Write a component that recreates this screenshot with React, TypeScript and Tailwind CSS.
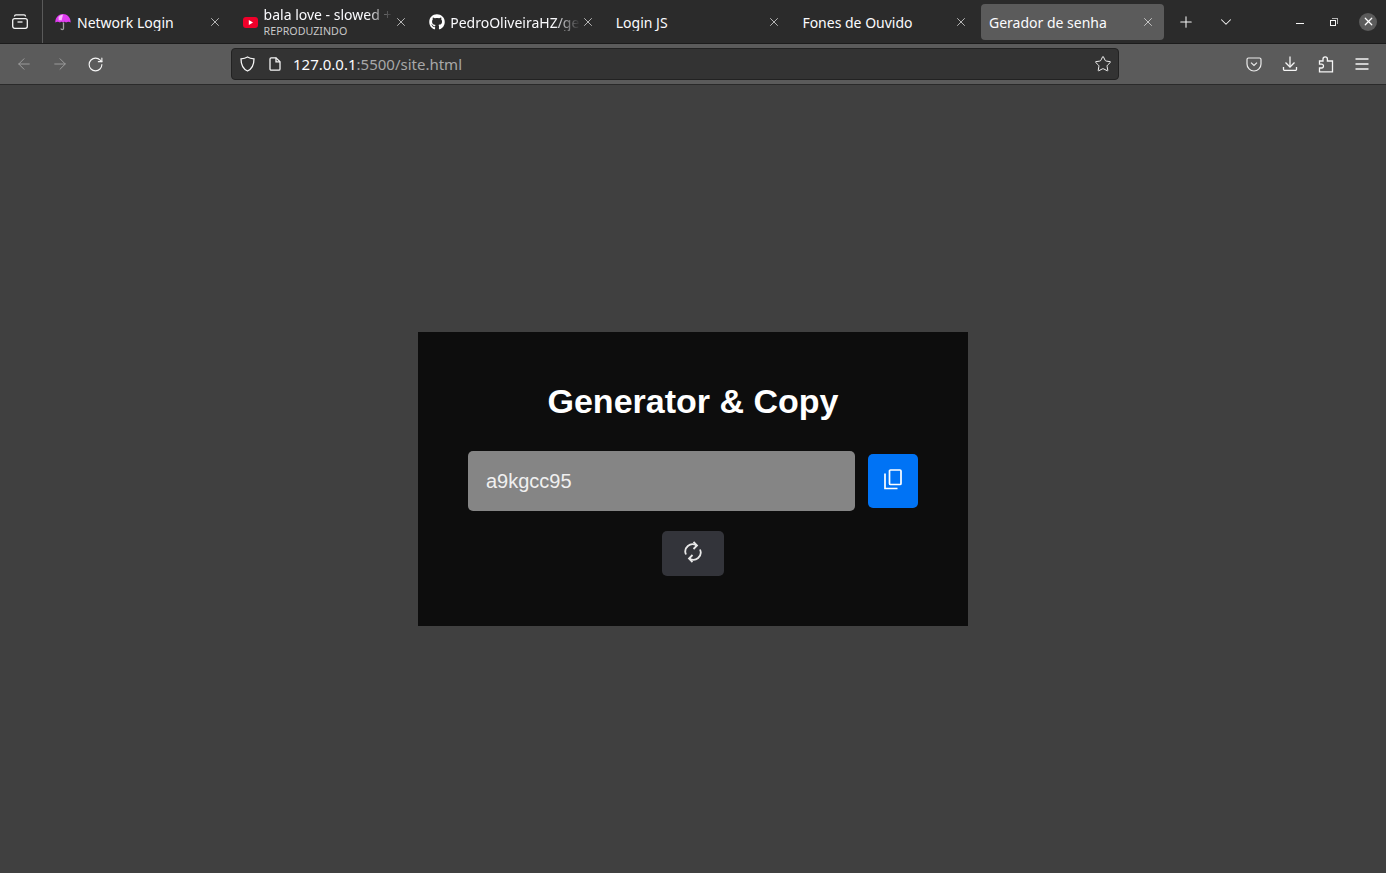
import React from 'react';
import { X, Plus, ChevronDown, ArrowLeft, ArrowRight, RotateCw, Star } from 'lucide-react';
import { FaGithub } from 'react-icons/fa';

const Umbrella = () => (
  <svg width="16" height="18" viewBox="0 0 16 18" className="shrink-0">
    <path d="M0.3 9.5 C0.3 4 4 1 8 1 C12 1 15.7 4 15.7 9.5 C14.2 8.4 12.6 8.4 11 9.5 C10 8.4 9 8.4 8 9.5 C7 8.4 6 8.4 5 9.5 C3.4 8.4 1.8 8.4 0.3 9.5 Z" fill="#e03cf0" />
    <path d="M3.5 4 C5 2.4 6.5 1.8 8 1.8 L6.6 7.5 C5.6 7 4.6 7 3.8 7.5 Z" fill="#f7b8fb" />
    <path d="M8.5 9.5 V15.5 C8.5 17 6 17 6 15.5" stroke="#a0a0a0" strokeWidth="1.3" fill="none" />
  </svg>
);

const Youtube = () => (
  <svg width="15" height="11" viewBox="0 0 15 11" className="shrink-0 ml-px">
    <rect width="15" height="11" rx="3" fill="#f0002a" />
    <path d="M5.8 3 L10 5.5 L5.8 8 Z" fill="#fff" />
  </svg>
);

const tabs = [
  { title: 'Network Login', icon: <Umbrella /> },
  { title: 'bala love - slowed + reverb', sub: 'REPRODUZINDO', icon: <Youtube /> },
  { title: 'PedroOliveiraHZ/gerador', icon: <FaGithub size={16} className="shrink-0 text-white ml-px -mr-px" /> },
  { title: 'Login JS' },
  { title: 'Fones de Ouvido' },
  { title: 'Gerador de senha', active: true },
];

const Tab = ({ title, sub, icon, active }: { title: string; sub?: string; icon?: React.ReactNode; active?: boolean }) => (
  <div className="w-[186.6px] px-[2px] py-1 shrink-0">
    <div className={`h-9 flex items-center gap-[6px] pr-[9px] rounded ${icon ? 'pl-[7px]' : 'pl-2'} ${active ? 'bg-[#5b5b5b]' : ''}`}>
      {icon}
      <div className={`flex-1 min-w-0 overflow-hidden -mr-[5px] ${sub ? 'pt-px' : ''}`}>
        <div className={`text-[14px] leading-[17px] whitespace-nowrap overflow-hidden text-[#fbfbfe] ${title.length > 20 ? 'mask-r-from-80%' : ''}`}>{title}</div>
        {sub && <div className="mt-px text-[10.7px] leading-[15px] text-[#c8c8c8] whitespace-nowrap">{sub}</div>}
      </div>
      <X size={14} strokeWidth={1.2} className="shrink-0 text-[#f0f0f0]" />
    </div>
  </div>
);

export default function App() {
  return (
    <div className="h-[873px] flex flex-col bg-[#404040] overflow-hidden font-['Noto_Sans',sans-serif]">
      <div className="h-[44px] flex bg-[#2b2b2b] border-b border-[#1c1c1c] shrink-0">
        <div className="w-[43px] h-full flex items-center justify-center border-r border-[#5a5a5a] shrink-0">
          <svg width="16" height="15" viewBox="0 0 16 15" fill="none" stroke="#f5f5f5" strokeWidth="1.3" className="-ml-[2px]">
            <rect x="0.7" y="4.6" width="14.6" height="9.7" rx="2" />
            <path d="M2.5 2.4 V2.2 A1.5 1.5 0 0 1 4 0.8 H12 A1.5 1.5 0 0 1 13.5 2.2 V2.4" />
            <path d="M5.5 8 H10.5" />
          </svg>
        </div>
        <div className="flex pl-[3px]">
          {tabs.map((t) => <Tab key={t.title} {...t} />)}
        </div>
        <div className="flex items-center">
          <Plus size={18} strokeWidth={1.4} className="ml-[11px] text-[#f5f5f5]" />
          <ChevronDown size={18} strokeWidth={1.4} className="ml-[22px] text-[#f5f5f5]" />
        </div>
        <div className="flex-1 flex items-center justify-end pr-[9px]">
          <div className="w-[8px] h-px bg-[#f5f5f5] mr-[26px] mt-[3px]" />
          <div className="relative w-[8px] h-[8px] mr-[21px]">
            <div className="absolute left-0 bottom-0 w-[6px] h-[6px] border border-[#f5f5f5]" />
            <div className="absolute right-0 top-0 w-[6px] h-[6px] border-t border-r border-[#b5b5b5]" />
          </div>
          <div className="w-[18px] h-[18px] rounded-full bg-[#5b5b5b] flex items-center justify-center">
            <X size={13} strokeWidth={2.2} className="text-white" />
          </div>
        </div>
      </div>

      <div className="h-[41px] flex items-center bg-[#5b5b5b] border-b border-[#2a2a2a] shrink-0">
        <ArrowLeft size={18} strokeWidth={1.3} className="ml-[15px] text-[#9d9d9d]" />
        <ArrowRight size={18} strokeWidth={1.3} className="ml-[18px] text-[#9d9d9d]" />
        <RotateCw size={17} strokeWidth={1.6} className="ml-[18px] text-[#f5f5f5]" />
        <div className="ml-[127px] w-[888px] h-[32px] flex items-center rounded bg-[#333333] border border-[#222222] pl-[8px] pr-[6px]">
          <svg width="15" height="16" viewBox="0 0 15 16" fill="none" stroke="#f5f5f5" strokeWidth="1.3" className="shrink-0">
            <path d="M7.5 1 C9.5 2.2 11.5 2.6 14 2.8 C14 9 12 13 7.5 15 C3 13 1 9 1 2.8 C3.5 2.6 5.5 2.2 7.5 1 Z" />
          </svg>
          <svg width="12" height="14" viewBox="0 0 12 14" fill="none" stroke="#f5f5f5" strokeWidth="1.3" className="ml-[14px] shrink-0">
            <path d="M1 2 A1.2 1.2 0 0 1 2.2 0.8 H7 L11 4.8 V12 A1.2 1.2 0 0 1 9.8 13.2 H2.2 A1.2 1.2 0 0 1 1 12 Z" />
            <path d="M7 0.8 V4.8 H11" />
          </svg>
          <div className="ml-[12px] flex-1 text-[15px] text-[#fbfbfe] whitespace-nowrap">
            127.0.0.1<span className="text-[#a8a8a8]">:5500/site.html</span>
          </div>
          <Star size={18} strokeWidth={1.3} className="text-[#f5f5f5]" />
        </div>
        <div className="flex-1 flex items-center justify-end pr-[16px] gap-[20px]">
          <svg width="16" height="15" viewBox="0 0 16 15" fill="none" stroke="#ececec" strokeWidth="1.2">
            <path d="M2.5 1 H13.5 A1.6 1.6 0 0 1 15 2.6 V7 A7 7 0 0 1 1 7 V2.6 A1.6 1.6 0 0 1 2.5 1 Z" />
            <path d="M5 5.6 L8 8.4 L11 5.6" />
          </svg>
          <svg width="16" height="16" viewBox="0 0 16 16" fill="none" stroke="#f5f5f5" strokeWidth="1.3">
            <path d="M8 0.5 V10.5" />
            <path d="M3.5 6.5 L8 11 L12.5 6.5" />
            <path d="M1.5 11 V13.2 A1.2 1.2 0 0 0 2.7 14.4 H13.3 A1.2 1.2 0 0 0 14.5 13.2 V11" />
          </svg>
          <svg width="16" height="17" viewBox="0 0 16 17" fill="none" stroke="#f5f5f5" strokeWidth="1.3">
            <path d="M1.5 5 H5 V3 A2.2 2.2 0 0 1 9.4 3 V5 H14.5 V15.8 H1.5 V12 H3.6 A1.9 1.9 0 0 0 3.6 8.2 H1.5 Z" />
          </svg>
          <svg width="16" height="16" viewBox="0 0 16 16" fill="none" stroke="#f5f5f5" strokeWidth="1.3">
            <path d="M1.5 3 H14.5 M1.5 8 H14.5 M1.5 13 H14.5" />
          </svg>
        </div>
      </div>

      <div className="flex-1 flex items-center justify-center">
        <div className="w-[550px] h-[294px] bg-[#0d0d0d] px-[50px] pt-[49px] font-['Liberation_Sans',sans-serif]">
          <h1 className="text-[34px] leading-[40px] font-bold text-white text-center">Generator &amp; Copy</h1>
          <div className="mt-[30px] flex items-center justify-between">
            <div className="w-[387px] h-[60px] bg-[#858585] rounded-[5px] flex items-center pl-[18px] text-[20px] text-[#f0f0f0]">a9kgcc95</div>
            <button className="w-[50px] h-[54px] bg-[#0073f5] rounded-[5px] flex items-center justify-center">
              <svg width="18" height="21" viewBox="0 0 18 21" fill="none" stroke="#fff" strokeWidth="1.7" className="mb-[3px]">
                <rect x="5.5" y="1" width="11.5" height="14.5" rx="1" />
                <path d="M1 4.5 V19.5 H13.5" />
              </svg>
            </button>
          </div>
          <button className="mx-auto mt-[20px] w-[62px] h-[45px] bg-[#33343a] rounded-[5px] flex items-center justify-center">
            <svg width="18" height="22" viewBox="0 0 18 22" fill="none" stroke="#e8e8e8" strokeWidth="1.8" className="mb-[3px]">
              <path d="M2 13.5 A7.2 7.2 0 0 1 12.5 4.5" />
              <path d="M16 8.5 A7.2 7.2 0 0 1 5.5 17.5" />
              <path d="M9.5 1 L13 4.5 L9.5 8" />
              <path d="M8.5 14 L5 17.5 L8.5 21" />
            </svg>
          </button>
        </div>
      </div>
    </div>
  );
}
